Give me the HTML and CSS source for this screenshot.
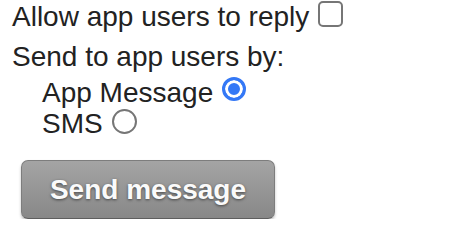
FILE: index.html
```html
<!DOCTYPE html>
<html>
<head>
<meta charset="utf-8">
<link rel="stylesheet" href="styles.css">
</head>
<body>
<form class="form">
  <div class="row row-first">
    <span class="label">Allow app users to reply</span>
    <span class="checkbox"></span>
  </div>
  <div class="row row-heading">
    <span class="label">Send to app users by:</span>
  </div>
  <div class="options">
    <div class="row option">
      <span class="label">App Message</span>
      <span class="radio radio-on"></span>
    </div>
    <div class="row option">
      <span class="label">SMS</span>
      <span class="radio radio-off"></span>
    </div>
  </div>
  <button type="button" class="send">Send message</button>
</form>
</body>
</html>
```
FILE: styles.css
```css
html, body {
  margin: 0;
  padding: 0;
  background: #fff;
}
.form {
  display: flex;
  flex-direction: column;
  align-items: flex-start;
  padding: 1px 0 0 12px;
  font-family: "Liberation Sans", Arial, sans-serif;
  font-size: 28px;
  color: #222;
}
.row {
  display: flex;
  align-items: flex-start;
  gap: 9px;
  line-height: 32px;
  height: 32px;
}
.row-heading {
  margin-top: 8px;
}
.options {
  display: flex;
  flex-direction: column;
  margin-top: 4px;
  padding-left: 30px;
}
.option {
  line-height: 31px;
  height: 31px;
  gap: 9px;
}
.checkbox {
  box-sizing: border-box;
  width: 25px;
  height: 26px;
  border: 2px solid #767676;
  border-radius: 5px;
  background: #fff;
}
.radio {
  box-sizing: border-box;
  width: 24px;
  height: 24px;
  border-radius: 50%;
}
.radio-on {
  border: 3px solid #3478f6;
  background: #3478f6;
  box-shadow: inset 0 0 0 3px #fff;
}
.radio-off {
  margin-top: 1px;
  width: 25px;
  height: 25px;
  border: 2px solid #767676;
  background: #fff;
}
.send {
  box-sizing: border-box;
  margin: 21px 0 0 9px;
  width: 254px;
  height: 59px;
  padding: 0;
  border: 1px solid #7d7d7d;
  border-bottom-color: #5e5e5e;
  border-radius: 7px;
  background: linear-gradient(#a4a4a4, #888888);
  box-shadow: 0 2px 3px rgba(0, 0, 0, 0.25);
  font-family: "Liberation Sans", Arial, sans-serif;
  font-size: 28px;
  font-weight: bold;
  color: #fafafa;
  text-shadow: 0 1px 3px rgba(0, 0, 0, 0.55);
}
```
